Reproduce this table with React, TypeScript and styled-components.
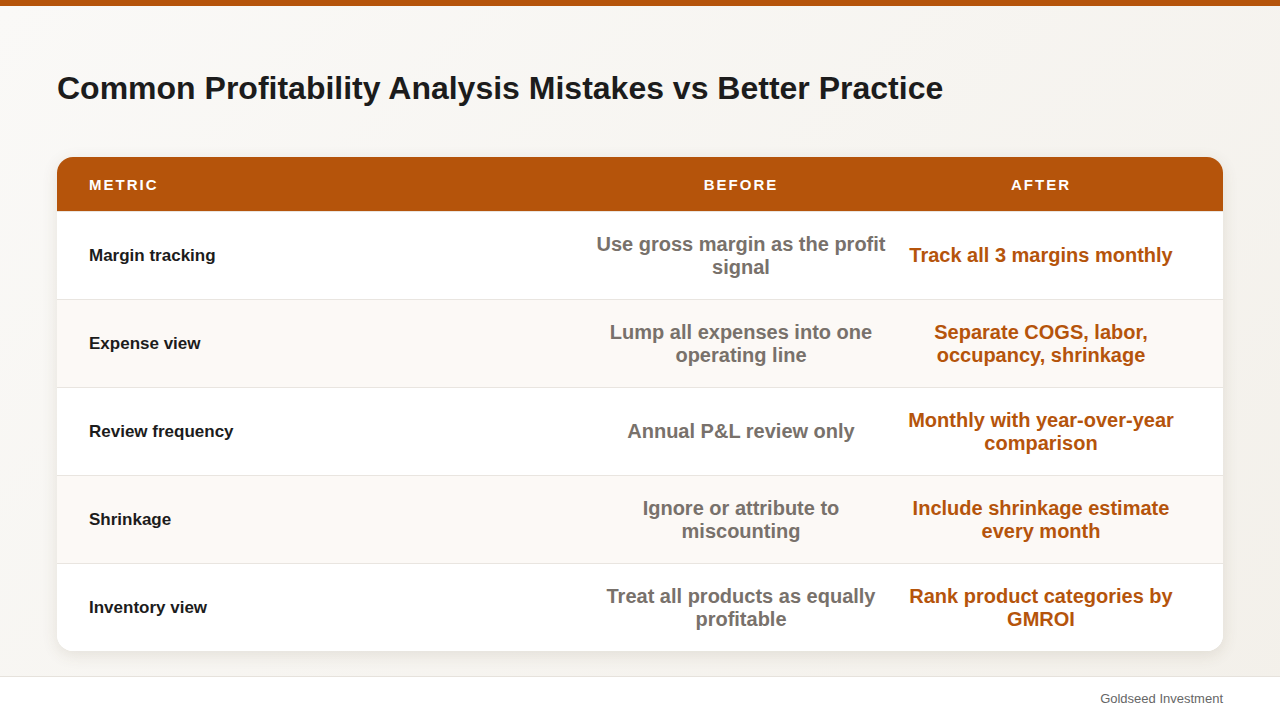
import styled, { createGlobalStyle } from 'styled-components';

const colores = {
  acento: '#b5540b',
  texto: '#1c1c1c',
  gris: '#78716b',
  borde: '#e9e5e0',
  alterno: '#fcf9f6',
};

const Global = createGlobalStyle`
  html, body {
    margin: 0;
    padding: 0;
  }
  body {
    font-family: "Liberation Sans", Arial, sans-serif;
  }
`;

const Pagina = styled.div`
  width: 1280px;
  height: 720px;
  display: flex;
  flex-direction: column;
  background: linear-gradient(135deg, #faf9f7 0%, #f3f0ea 100%);
  border-top: 6px solid ${colores.acento};
  box-sizing: border-box;
  overflow: hidden;
`;

const Contenido = styled.main`
  flex: 1;
  padding: 62px 57px 0;
  display: flex;
  flex-direction: column;
`;

const Titulo = styled.h1`
  margin: 0 0 49px;
  font-size: 32px;
  line-height: 40px;
  font-weight: 700;
  color: ${colores.texto};
`;

const Tabla = styled.div`
  background: #fff;
  border-radius: 16px;
  overflow: hidden;
  box-shadow: 0 4px 16px rgba(90, 70, 40, 0.12);
`;

const Fila = styled.div<{ $alterna?: boolean }>`
  display: grid;
  grid-template-columns: 1fr 300px 300px;
  align-items: center;
  padding: 0 32px;
  height: 88px;
  background: ${(p) => (p.$alterna ? colores.alterno : '#fff')};
  border-top: 1px solid ${colores.borde};
  box-sizing: border-box;
`;

const Cabecera = styled(Fila)`
  height: 54px;
  background: ${colores.acento};
  border-top: none;
`;

const CeldaCabecera = styled.div<{ $centro?: boolean }>`
  color: #fff;
  font-size: 15px;
  font-weight: 700;
  letter-spacing: 2px;
  text-transform: uppercase;
  text-align: ${(p) => (p.$centro ? 'center' : 'left')};
`;

const Metrica = styled.div`
  font-size: 17px;
  font-weight: 700;
  color: ${colores.texto};
`;

const Valor = styled.div<{ $despues?: boolean }>`
  font-size: 20px;
  line-height: 23px;
  font-weight: 700;
  text-align: center;
  padding: 0 4px;
  color: ${(p) => (p.$despues ? colores.acento : colores.gris)};
`;

const Pie = styled.footer`
  height: 44px;
  flex-shrink: 0;
  background: #fff;
  border-top: 1px solid #e6e2dc;
  display: flex;
  align-items: center;
  justify-content: flex-end;
  padding: 0 57px;
  box-sizing: border-box;
  font-size: 13px;
  color: #666;
`;

const filas = [
  { metrica: 'Margin tracking', antes: 'Use gross margin as the profit signal', despues: 'Track all 3 margins monthly' },
  { metrica: 'Expense view', antes: 'Lump all expenses into one operating line', despues: 'Separate COGS, labor, occupancy, shrinkage' },
  { metrica: 'Review frequency', antes: 'Annual P&L review only', despues: 'Monthly with year-over-year comparison' },
  { metrica: 'Shrinkage', antes: 'Ignore or attribute to miscounting', despues: 'Include shrinkage estimate every month' },
  { metrica: 'Inventory view', antes: 'Treat all products as equally profitable', despues: 'Rank product categories by GMROI' },
];

export default function App() {
  return (
    <Pagina>
      <Global />
      <Contenido>
        <Titulo>Common Profitability Analysis Mistakes vs Better Practice</Titulo>
        <Tabla>
          <Cabecera>
            <CeldaCabecera>Metric</CeldaCabecera>
            <CeldaCabecera $centro>Before</CeldaCabecera>
            <CeldaCabecera $centro>After</CeldaCabecera>
          </Cabecera>
          {filas.map((f, i) => (
            <Fila key={f.metrica} $alterna={i % 2 === 1}>
              <Metrica>{f.metrica}</Metrica>
              <Valor>{f.antes}</Valor>
              <Valor $despues>{f.despues}</Valor>
            </Fila>
          ))}
        </Tabla>
      </Contenido>
      <Pie>Goldseed Investment</Pie>
    </Pagina>
  );
}
